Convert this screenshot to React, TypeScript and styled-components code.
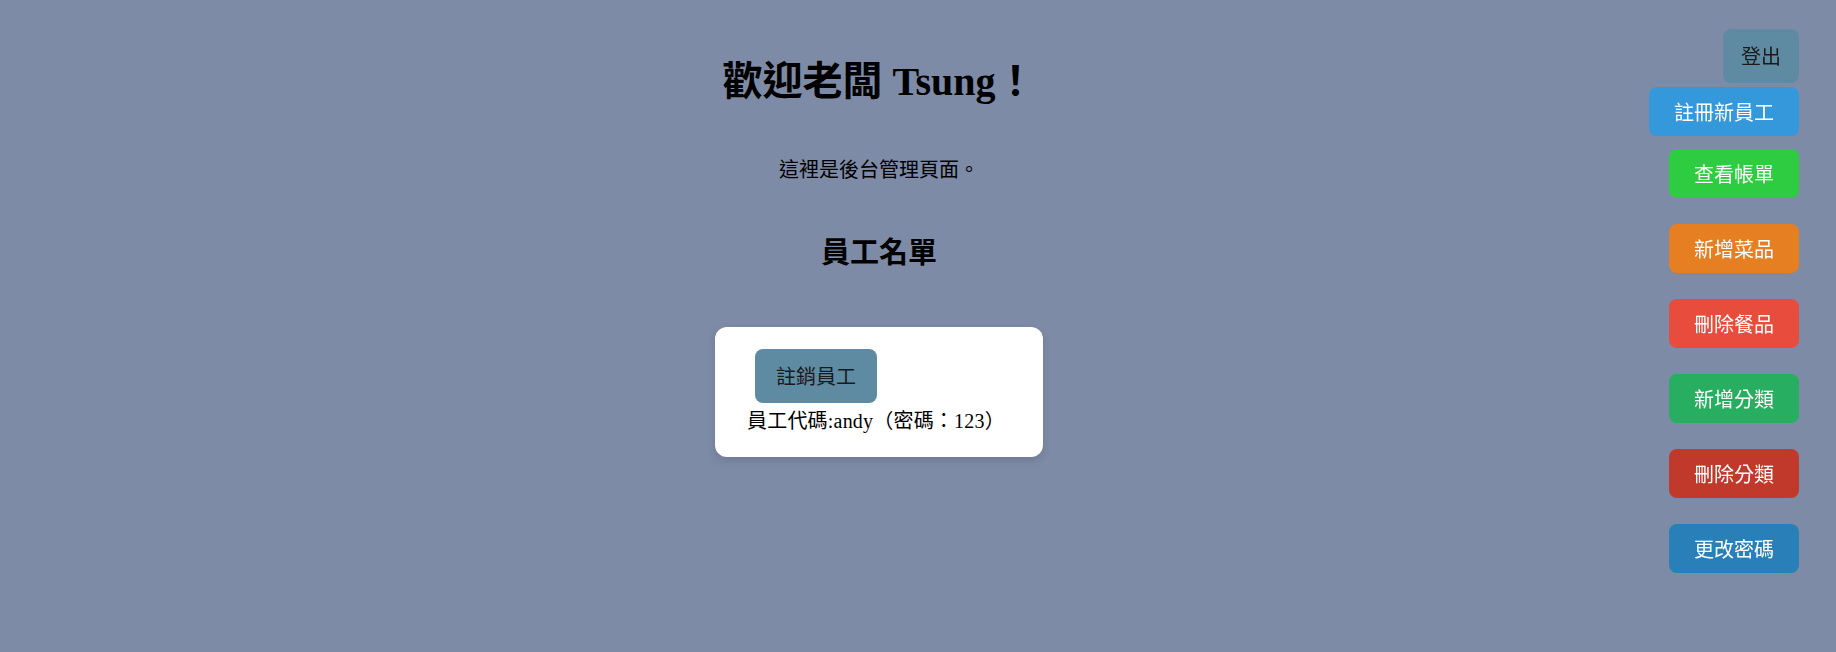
import styled, { createGlobalStyle } from 'styled-components';

const GlobalStyle = createGlobalStyle`
  html, body {
    margin: 0;
    padding: 0;
    background: #7e8ba6;
    font-family: "Liberation Serif", "Noto Sans CJK TC", serif;
    color: #000;
  }
`;

const Page = styled.div`
  min-height: 652px;
  padding-right: 78px;
`;

const Main = styled.main`
  display: flex;
  flex-direction: column;
  align-items: center;
  padding-top: 58px;
`;

const Title = styled.h1`
  margin: 0;
  font-size: 40px;
  line-height: 48px;
  font-weight: bold;
`;

const Subtitle = styled.p`
  margin: 50px 0 0;
  font-size: 20px;
  line-height: 29px;
`;

const SectionTitle = styled.h2`
  margin: 51px 0 0;
  font-size: 29px;
  line-height: 35px;
  font-weight: bold;
`;

const Card = styled.div`
  margin-top: 56px;
  background: #fff;
  border-radius: 12px;
  box-shadow: 0 4px 10px rgba(0, 0, 0, 0.12);
  padding: 22px 32px 21px;
  display: flex;
  flex-direction: column;
  align-items: flex-start;
  min-width: 264px;
`;

const GreyButton = styled.button<{ $px?: number }>`
  border: none;
  border-radius: 8px;
  background: #5f8ba2;
  color: #1a1a1a;
  font-family: "Noto Sans CJK TC", sans-serif;
  font-size: 20px;
  line-height: 30px;
  padding: 12px ${p => p.$px ?? 21}px;
  cursor: pointer;
`;

const RevokeButton = styled(GreyButton)`
  margin-left: 8px;
`;

const EmployeeLine = styled.div`
  margin-top: 4px;
  font-size: 20px;
  line-height: 29px;
  letter-spacing: 0.2px;
  white-space: nowrap;
`;

const SideBar = styled.nav`
  position: fixed;
  top: 29px;
  right: 37px;
  display: flex;
  flex-direction: column;
  align-items: flex-end;
`;

const LogoutButton = styled(GreyButton)`
  margin-bottom: 4px;
`;

const ActionButton = styled.button<{ $bg: string; $gap: number }>`
  border: none;
  border-radius: 8px;
  background: ${p => p.$bg};
  color: #fff;
  font-family: "Noto Sans CJK TC", sans-serif;
  font-size: 20px;
  line-height: 29px;
  height: 49px;
  padding: 0 25px;
  margin-bottom: ${p => p.$gap}px;
  cursor: pointer;
`;

const actions = [
  { label: '註冊新員工', bg: '#3498db', gap: 13 },
  { label: '查看帳單', bg: '#2ecc40', gap: 26 },
  { label: '新增菜品', bg: '#e67e22', gap: 26 },
  { label: '刪除餐品', bg: '#e74c3c', gap: 26 },
  { label: '新增分類', bg: '#27ae60', gap: 26 },
  { label: '刪除分類', bg: '#c0392b', gap: 26 },
  { label: '更改密碼', bg: '#2980b9', gap: 26 },
];

const employees = [{ id: 'andy', password: '123' }];

export default function App() {
  return (
    <Page>
      <GlobalStyle />
      <Main>
        <Title>歡迎老闆 Tsung！</Title>
        <Subtitle>這裡是後台管理頁面。</Subtitle>
        <SectionTitle>員工名單</SectionTitle>
        {employees.map(emp => (
          <Card key={emp.id}>
            <RevokeButton>註銷員工</RevokeButton>
            <EmployeeLine>員工代碼:{emp.id}（密碼：{emp.password}）</EmployeeLine>
          </Card>
        ))}
      </Main>
      <SideBar>
        <LogoutButton $px={18}>登出</LogoutButton>
        {actions.map(a => (
          <ActionButton key={a.label} $bg={a.bg} $gap={a.gap}>{a.label}</ActionButton>
        ))}
      </SideBar>
    </Page>
  );
}
